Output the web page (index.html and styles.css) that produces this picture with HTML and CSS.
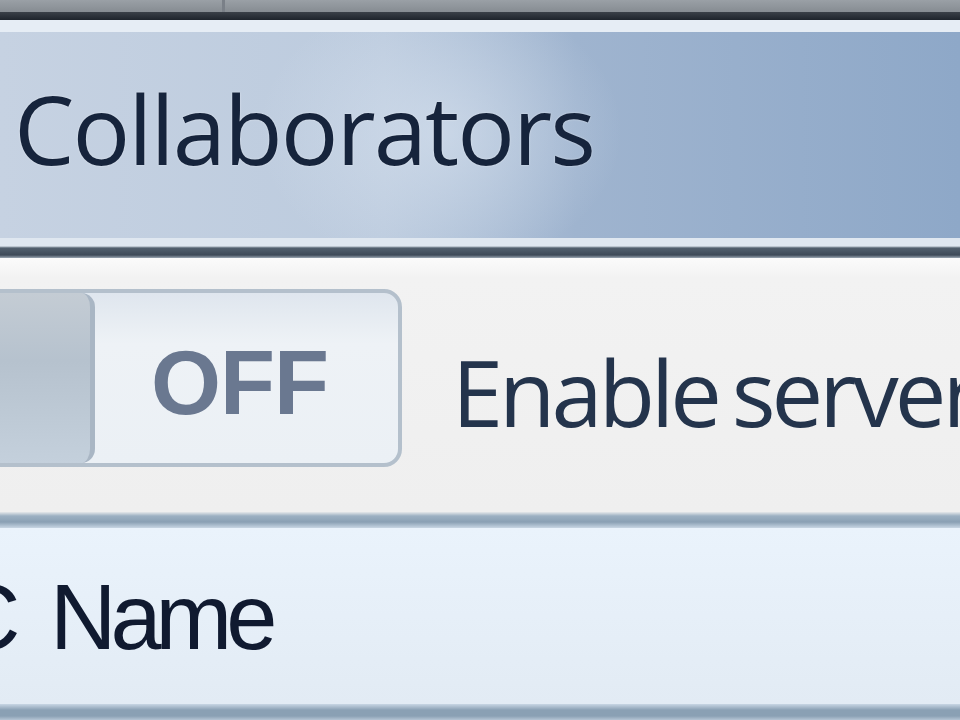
FILE: index.html
```html
<!DOCTYPE html>
<html>
<head>
<meta charset="utf-8">
<link rel="stylesheet" href="styles.css">
</head>
<body>
<div class="screen">
  <div class="topstrip"><div class="tab-a"></div><div class="tab-b"></div></div>
  <div class="dark-edge"></div>
  <div class="titlebar">
    <h1 class="title">Collaborators</h1>
  </div>
  <div class="title-bottom"></div>
  <div class="content">
    <div class="toggle">
      <div class="thumb"></div>
      <div class="state">OFF</div>
    </div>
    <div class="label">Enable server</div>
  </div>
  <div class="list-edge"></div>
  <div class="list-header">
    <div class="col-name">C Name</div>
  </div>
  <div class="list-edge bottom"></div>
</div>
</body>
</html>
```
FILE: styles.css
```css
html, body {
  margin: 0;
  padding: 0;
  width: 960px;
  height: 720px;
  overflow: hidden;
  background: #eef0f2;
}
.screen {
  width: 960px;
  height: 720px;
  display: flex;
  flex-direction: column;
  overflow: hidden;
}
.topstrip {
  height: 12px;
  flex: none;
  display: flex;
  background: linear-gradient(#9aa0a6, #868c92);
}
.tab-a {
  width: 222px;
  border-right: 3px solid #7a8088;
}
.tab-b { flex: 1; }
.dark-edge {
  height: 8px;
  flex: none;
  background: linear-gradient(#3a4048, #1e242c);
}
.titlebar {
  height: 218px;
  flex: none;
  box-sizing: border-box;
  border-top: 12px solid #e6edf5;
  background:
    radial-gradient(ellipse 260px 200px at 440px 100px, rgba(220,230,242,0.55), rgba(220,230,242,0) 70%),
    linear-gradient(90deg, #c6d2e2 0%, #bccbde 40%, #9fb4cf 60%, #8ea8c8 100%);
  display: flex;
  align-items: center;
  padding-left: 14px;
  padding-bottom: 14px;
}
.title {
  margin: 0;
  font-family: "Open Sans", "DejaVu Sans", sans-serif;
  font-weight: 400;
  font-size: 96px;
  letter-spacing: -2px;
  color: #16243c;
  line-height: 1;
  text-shadow: 0 0 2px rgba(255,255,255,0.6);
}
.title-bottom {
  height: 20px;
  flex: none;
  background: linear-gradient(#dfe7f0 0px, #dfe7f0 8px, #52606e 10px, #3e4a58 17px, #9aa6b2 20px);
}
.content {
  height: 254px;
  flex: none;
  background: linear-gradient(#fbfbfb 0px, #f2f2f2 20px, #efefef 100%);
  display: flex;
  align-items: center;
  overflow: hidden;
  white-space: nowrap;
}
.toggle {
  margin-left: -40px;
  margin-bottom: 14px;
  height: 178px;
  width: 442px;
  flex: none;
  display: flex;
  box-sizing: border-box;
  border: 4px solid #b4c0cc;
  border-radius: 18px;
  background: linear-gradient(#dfe6ee, #eef2f6 30%, #ebf0f5);
  overflow: hidden;
}
.thumb {
  width: 131px;
  flex: none;
  box-sizing: border-box;
  border-right: 5px solid #a9b6c4;
  border-radius: 0 14px 14px 0;
  background: linear-gradient(#c4ccd4, #b6c2ce 40%, #c4d0dc 100%);
}
.state {
  flex: 1;
  display: flex;
  align-items: center;
  justify-content: center;
  padding-right: 14px;
  padding-top: 10px;
  font-family: "Liberation Sans", Arial, sans-serif;
  font-weight: 700;
  font-size: 90px;
  color: #6a7890;
  letter-spacing: -1px;
}
.label {
  margin-left: 50px;
  font-family: "Open Sans", "DejaVu Sans", sans-serif;
  font-size: 92px;
  letter-spacing: -4px;
  word-spacing: -6px;
  color: #24344c;
  padding-top: 12px;
}
.list-edge {
  height: 16px;
  flex: none;
  background: linear-gradient(#e6e8ea 0px, #9cb0c2 4px, #8aa0b4 10px, #c8d6e4 16px);
}
.list-edge.bottom {
  height: 16px;
  background: linear-gradient(#c8d6e4 0px, #8aa0b4 6px, #8aa0b4 12px, #b4c4d4 16px);
}
.list-header {
  height: 176px;
  flex: none;
  background: linear-gradient(#eaf3fc 0%, #e6eff8 50%, #e2ebf4 100%);
  display: flex;
  align-items: center;
  overflow: hidden;
  white-space: nowrap;
}
.col-name {
  margin-left: -46px;
  font-family: "Liberation Sans", Arial, sans-serif;
  font-size: 92px;
  letter-spacing: -6px;
  word-spacing: 16px;
  color: #101a30;
  padding-top: 2px;
}
```
